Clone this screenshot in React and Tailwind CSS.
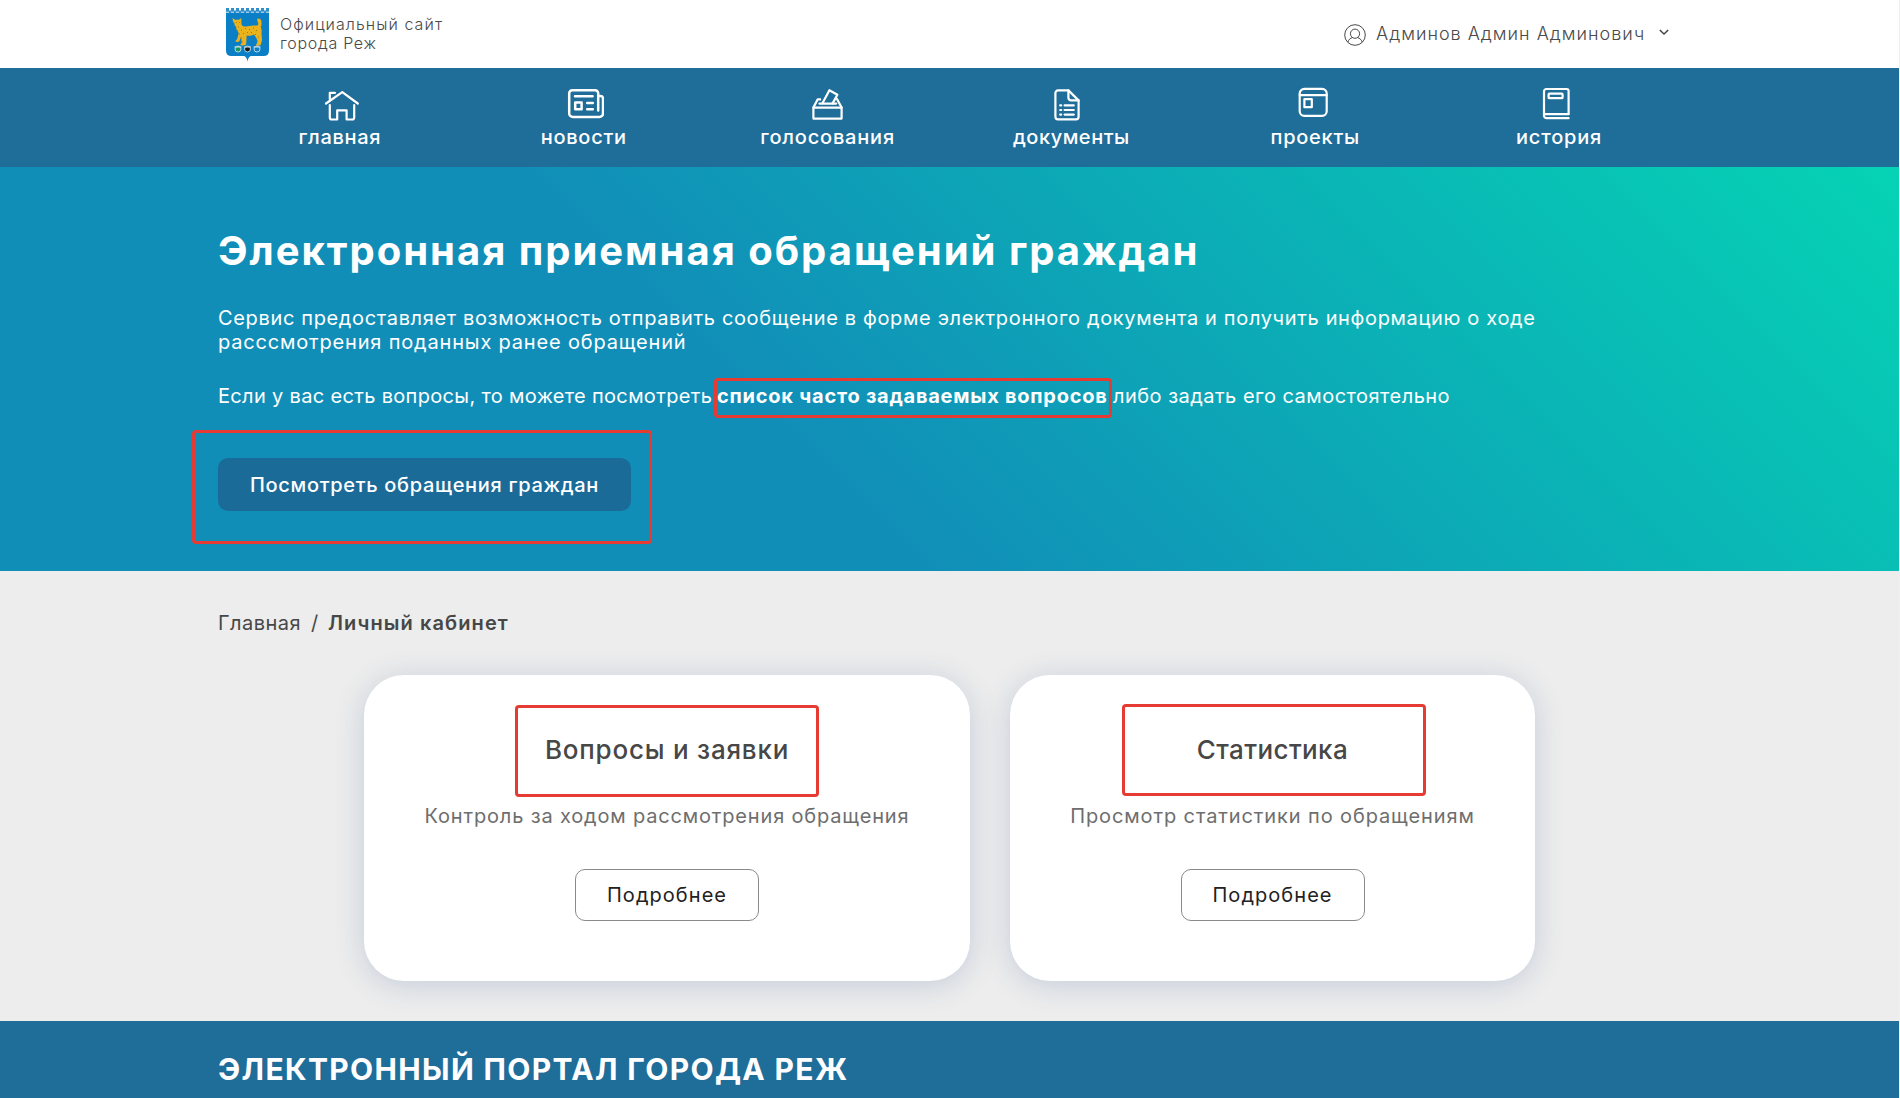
import React from "react";

const icons = {
  home: (
    <>
      <path d="M6 17.5 22.3 6.2 37.8 17.5" />
      <path d="M9.8 13V6.8H15" />
      <path d="M9.8 19v12.5a2 2 0 0 0 2 2h5.4V24.3h9.4v9.2h5.6a2 2 0 0 0 2-2V19" />
    </>
  ),
  news: (
    <g strokeWidth="2.5">
      <path d="M34.2 24.5V7.2a3 3 0 0 0-3-3H8.2a3 3 0 0 0-3 3V27.4a3.6 3.6 0 0 0 3.6 3.6h26.6a3.6 3.6 0 0 0 3.6-3.6V12.6a2.6 2.6 0 0 0-2.6-2.6h-2" />
      <path d="M11 10.2h17.6M23.2 16.9h5.6M23.2 23.2h5.6" />
      <rect x="11.2" y="16.6" width="6.4" height="6.6" />
    </g>
  ),
  vote: (
    <>
      <path d="M5.4 21.6h28.2v11H5.4z" />
      <path d="M5.4 21.6 9.6 13.4h2.6M33.6 21.6l-4.6-8.6" />
      <path d="M11.4 17.6h16.8" />
      <path d="M14.6 17 21.4 4.2l8 4.6L24.6 17.4" />
    </>
  ),
  doc: (
    <>
      <path d="M17.4 4.4H7a2.6 2.6 0 0 0-2.6 2.6v23.8A2.6 2.6 0 0 0 7 33.4h18a2.6 2.6 0 0 0 2.6-2.6V14.4z" />
      <path d="M17.4 4.4v7.4a2.6 2.6 0 0 0 2.6 2.6h7.6" />
      <path d="M13.6 19.4h9.2M13.6 24h9.2M13.6 28.6h9.2M9.2 19.4h1M9.2 24h1M9.2 28.6h1" />
    </>
  ),
  project: (
    <>
      <rect x="4.7" y="2.9" width="27" height="27" rx="4.6" />
      <path d="M4.7 9.1h27" />
      <rect x="9.4" y="13.2" width="7.4" height="8" />
    </>
  ),
  history: (
    <>
      <path d="M29.6 27.8V5a2 2 0 0 0-2-2H7.4a2.4 2.4 0 0 0-2.4 2.4v24.2a2.6 2.6 0 0 0 2.6 2.6h22" />
      <path d="M5.4 28.2h24.2" />
      <rect x="9.6" y="7.6" width="14" height="4.6" rx="0.8" />
    </>
  ),
};

const nav = [
  ["главная", "home", "tracking-[0.034em]"],
  ["новости", "news", "tracking-[0.037em]"],
  ["голосования", "vote", "tracking-[0.04em]"],
  ["документы", "doc", "tracking-[0.026em]"],
  ["проекты", "project", "tracking-[0.036em]"],
  ["история", "history", "tracking-[0.04em]"],
];

function Emblem() {
  return (
    <svg className="mt-px h-[54px] w-[43px]" viewBox="0 0 43 54" fill="none">
      <path d="M0 5h43v37.500q0 5.500-5.500 5.500H25.500q-3 0-4 5.500-1-5.500-4-5.500H5.500Q0 48 0 42.500z" fill="#0a7fc6" />
      <path d="M0 0h3v2.600h2V0h3v2.600h2V0h3v2.600h2V0h3v2.600h2V0h3v2.600h2V0h3v2.600h2V0h3v2.600h2V0h3v2.600h2V0h3v5H0z" fill="#2f8fcd" />
      <path d="M0 4.200h43" stroke="#cfe4f2" strokeWidth="1" strokeDasharray="3 2" />
      <path
        d="m6.500 10 2.600 1.800 3.800-.1 2.400-1.700.1 5c-.2 1.300.6 2.600 2 3.200 3 .5 6.300 0 9.800-.6 2.400-.3 4.400.4 5-1.200.6-2-2-3.800-.6-5.600 1-1 3.200.1 3.600 1.800.4 2.300.6 4.600-.4 6.400 1 2.400.9 4.400.7 6.500l.5 6.700-1.300 4.700c-1.400.9-3.400.9-4.900.5l1.400-2.700-.4-4-2.800-4.200c-2.400 1.600-5 1.600-7.300.9l-.6 9c-1.600 1.100-4 1.400-6 .6l1.600-2-.4-6-2 4.200c-1.100.9-2.700.9-4 .1l2-2.600 1.400-5.700c-1.600-2-2.900-4-2.500-6.200-1.300-.9-1.900-2.100-1.700-3.400l-1.500-2z"
        fill="#eab31c"
      />
      <path
        d="M10 14.500h.8M13 14.500h.8M12 19h1M15 22h1M19 20.500h1M23 21.500h1M27 20h1M30 22.500h1M13 26h1M17 25.500h1M21 24.500h1M25 24.500h1M29 26.500h1M32 29h1M14 30h1M31 33h1M16 34h1M11 22.500h1"
        stroke="#a57a16"
        strokeWidth="1.100"
      />
      <g fill="#0a7fc6" stroke="#b9d5e6" strokeWidth="1">
        <circle cx="12" cy="41" r="3" fill="#149a5c" />
        <circle cx="21.500" cy="41" r="3" fill="#191919" />
        <circle cx="31" cy="41" r="3" />
      </g>
      <path d="M8.500 39h7M18 39h7M27.500 39h7" stroke="#d7e2e6" strokeWidth="1.200" />
    </svg>
  );
}

function UserIcon() {
  return (
    <svg className="mt-px h-[22px] w-[22px]" viewBox="0 0 22 22" fill="none" stroke="#4a4a4a" strokeWidth="1">
      <circle cx="11" cy="11" r="10.300" />
      <circle cx="11" cy="9.700" r="4.600" />
      <path d="M3.800 18.200c.8-2.500 2.500-4.200 4.900-4.700M18.200 18.200c-.8-2.500-2.500-4.200-4.900-4.700" />
    </svg>
  );
}

function Card({ width, title, titleClass, text, textClass, frameClass }) {
  return (
    <article
      className={`${width} relative flex h-[306px] flex-col items-center rounded-[40px] bg-white pt-[59px] shadow-[0_4px_30px_rgba(35,75,140,0.2)]`}
    >
      <div className={`${frameClass} absolute h-[92px] w-[304px] rounded-[4px] border-[3px] border-[#e63b32]`} />
      <h2 className={`${titleClass} text-[26px] leading-[31px] font-medium text-[#474747]`}>{title}</h2>
      <p className={`${textClass} mt-[39px] text-[20px] leading-6 whitespace-nowrap text-[#6e6e6e]`}>{text}</p>
      <button className="mt-[41px] flex h-[52px] w-[184px] items-center justify-center rounded-[10px] border border-[#8a8a8a] text-[20px] leading-6 tracking-[0.053em] text-[#222]">
        Подробнее
      </button>
    </article>
  );
}

export default function App() {
  return (
    <div className="h-[1098px] overflow-hidden bg-[#f0f0f0] pr-px font-['Inter',sans-serif]">
      <header className="h-[68px] bg-white">
        <div className="mx-auto flex h-full w-[1463px] items-center justify-between pr-[12px] pl-[8px]">
          <div className="flex items-center gap-[11px]">
            <Emblem />
            <div className="text-[16px] leading-[19px] font-light text-[#4a4a4a]">
              <div className="tracking-[0.067em]">Официальный сайт</div>
              <div className="tracking-[0.044em]">города Реж</div>
            </div>
          </div>
          <div className="flex items-center">
            <UserIcon />
            <span className="ml-[10px] w-[270px] text-[18px] leading-[22px] font-light tracking-[0.056em] whitespace-nowrap text-[#4a4a4a]">
              Админов Админ Админович
            </span>
            <svg className="mb-[4px] ml-[13px] h-[8px] w-[10px]" viewBox="0 0 10 8" fill="none" stroke="#444" strokeWidth="1.500">
              <path d="m.8 2 4.200 4 4.200-4" />
            </svg>
          </div>
        </div>
      </header>

      <nav className="h-[99px] bg-[#1f6d99]">
        <div className="mx-auto grid w-[1463px] grid-cols-6 pt-[18px]">
          {nav.map(([label, icon, tracking]) => (
            <a key={label} className="flex flex-col items-center text-white">
              <svg
                className="h-[36px] w-[40px]"
                viewBox="0 0 40 36"
                fill="none"
                stroke="currentColor"
                strokeWidth="2.2"
                strokeLinecap="round"
                strokeLinejoin="round"
              >
                {icons[icon]}
              </svg>
              <span className={`${tracking} mt-[3px] text-[20px] leading-6 font-medium`}>{label}</span>
            </a>
          ))}
        </div>
      </nav>

      <section className="h-[404px] bg-[linear-gradient(45deg,#118eb8_0%,#118eb8_40%,#05d3b4_100%)] text-white">
        <div className="mx-auto w-[1463px] pt-[60px]">
          <h1 className="text-[40px] leading-[48px] font-bold tracking-[0.0495em] whitespace-nowrap">
            Электронная приемная обращений граждан
          </h1>
          <div className="mt-[31px] text-[20px] leading-6 whitespace-nowrap">
            <p className="tracking-[0.0325em]">
              Сервис предоставляет возможность отправить сообщение в форме электронного документа и получить информацию о ходе
            </p>
            <p className="tracking-[0.041em]">расссмотрения поданных ранее обращений</p>
            <p className="mt-[30px] flex">
              <span className="w-[499px] tracking-[0.0165em]">Если у вас есть вопросы, то можете посмотреть</span>
              <b className="relative w-[396px] font-bold tracking-[0.038em]">
                список часто задаваемых вопросов
                <span className="absolute -top-[6px] -left-[3px] h-[40px] w-[398px] rounded-[4px] border-[3px] border-[#e63b32]" />
              </b>
              <span className="tracking-[0.024em]">либо задать его самостоятельно</span>
            </p>
          </div>
          <div className="relative mt-[50px] w-[413px]">
            <button className="flex h-[53px] w-full items-center justify-center rounded-[10px] bg-[#1b6b99] text-[20px] leading-6 font-medium tracking-[0.0345em] whitespace-nowrap">
              Посмотреть обращения граждан
            </button>
            <div className="absolute -top-[28px] -left-[26px] h-[114px] w-[460px] rounded-[4px] border-[3px] border-[#e63b32]" />
          </div>
        </div>
      </section>

      <main className="h-[450px] bg-[#ededed] pt-[40px]">
        <div className="mx-auto flex w-[1463px] text-[20px] leading-6 text-[#474747]">
          <span className="w-[93px] tracking-[0.024em]">Главная</span>
          <span className="w-[17px]">/</span>
          <span className="font-semibold tracking-[0.055em]">Личный кабинет</span>
        </div>
        <div className="mt-[40px] flex justify-center gap-[40px]">
          <Card
            width="w-[606px]"
            title="Вопросы и заявки"
            titleClass="tracking-[0.03em]"
            text="Контроль за ходом рассмотрения обращения"
            textClass="tracking-[0.0415em]"
            frameClass="top-[30px] left-[151px]"
          />
          <Card
            width="w-[525px]"
            title="Статистика"
            titleClass="tracking-[0.015em]"
            text="Просмотр статистики по обращениям"
            textClass="tracking-[0.0445em]"
            frameClass="top-[29px] left-[112px]"
          />
        </div>
      </main>

      <footer className="h-[77px] bg-[#1f6d99] pt-[30px] text-white">
        <div className="mx-auto w-[1463px] text-[30px] leading-9 font-bold tracking-[0.045em]">ЭЛЕКТРОННЫЙ ПОРТАЛ ГОРОДА РЕЖ</div>
      </footer>
    </div>
  );
}
